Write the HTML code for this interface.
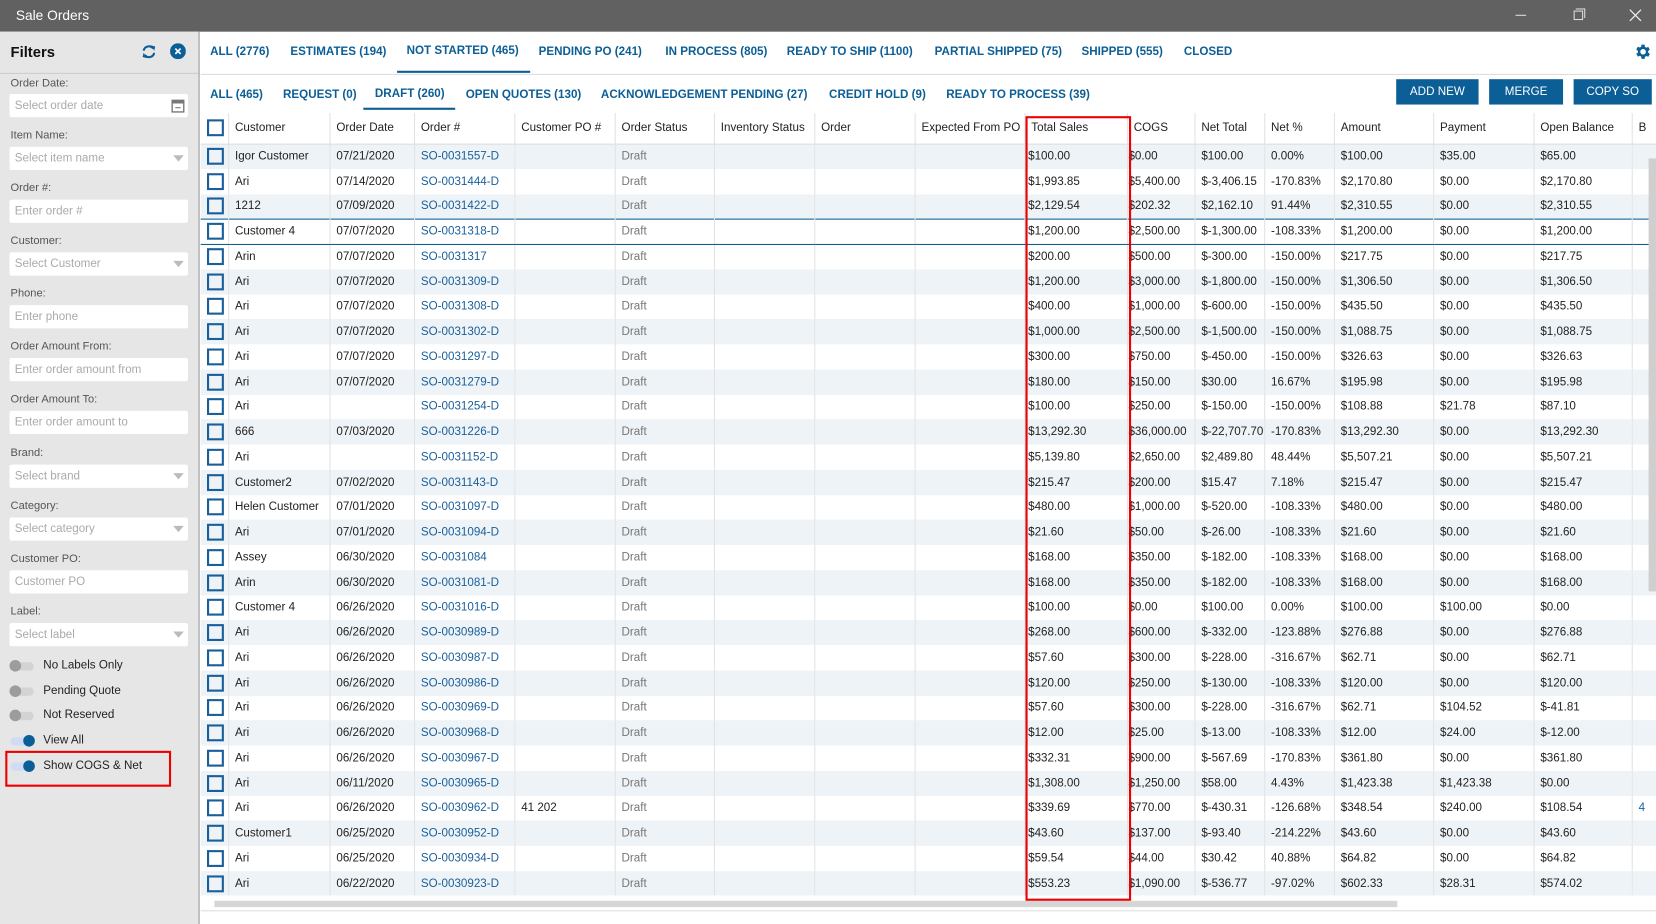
<!DOCTYPE html>
<html><head><meta charset="utf-8"><style>
*{box-sizing:border-box;margin:0;padding:0}
html,body{width:1656px;height:924px;overflow:hidden;background:#fff}
#s{position:absolute;left:0;top:0;width:1568px;height:875px;transform:scale(1.05612,1.056);transform-origin:0 0;font-family:"Liberation Sans",sans-serif;font-size:11px;color:#222}
.a{position:absolute}
#tb{left:0;top:0;width:1568px;height:30px;background:#616161;color:#fff}
#side{left:0;top:30px;width:189px;height:845px;background:#e6e6e6;border-right:1px solid #9a9a9a}
.lbl{position:absolute;left:10px;color:#555;font-size:10.5px}
.inp{position:absolute;left:9px;width:169px;height:22px;background:#fff;border-radius:2px;color:#aaa;font-size:11px;padding:5px 0 0 5px}
.dd:after{content:"";position:absolute;right:4px;top:8px;border-left:5px solid transparent;border-right:5px solid transparent;border-top:6px solid #bbb}
.tg{position:absolute;left:10px;width:22px;height:8px;border-radius:4px;background:#d3d3d3}
.tg i{position:absolute;left:-1px;top:-2px;width:11px;height:11px;border-radius:50%;background:#9c9c9c}
.tg.on{background:#cfdcf3}.tg.on i{left:12px;background:#0b5e96}
.tl{position:absolute;left:41px;font-size:11px;color:#222}
.tab{position:absolute;color:#0b5e96;font-weight:bold;font-size:11px;white-space:nowrap}
.btn{position:absolute;top:75px;height:24px;background:#0b5e96;color:#fff;font-size:11px;text-align:center;line-height:24px}
table{position:absolute;left:190px;top:107px;border-collapse:collapse;table-layout:fixed;width:1378px}
td,th{height:23.76px;font-weight:normal;text-align:left;padding:0 0 0 6px;white-space:nowrap;overflow:hidden;border-left:1px solid #e2e2e2;font-size:11px}
th{height:29px;border-bottom:1px solid #ddd;color:#222}
tr.z td{background:#edf3f6}
tr.sel td{border-top:1px solid #0b5e96;border-bottom:1px solid #0b5e96}
td.c,th.c{border-left:none;padding:0 0 0 6px}
.cb{display:inline-block;width:16px;height:16px;border:2px solid #1a5f9a;vertical-align:middle}
td.o{color:#1a5f9a}td.d{color:#777}
td.t{padding-left:3px}td.g{padding-left:1px}
</style></head><body><div id="s">
<div id="tb" class="a"><span class="a" style="left:15px;top:7px;font-size:13px">Sale Orders</span>
<span class="a" style="left:1435px;top:14px;width:10px;height:1px;background:#ddd"></span>
<span class="a" style="left:1490px;top:10px;width:9px;height:9px;border:1px solid #ddd"></span>
<span class="a" style="left:1492px;top:8px;width:9px;height:9px;border-top:1px solid #ddd;border-right:1px solid #ddd"></span>
<svg class="a" style="left:1543px;top:9px" width="11" height="11"><path d="M0 0L11 11M11 0L0 11" stroke="#eee" stroke-width="1.2"/></svg></div>
<div id="side" class="a">
<span class="a" style="left:10px;top:11px;font-weight:bold;font-size:14px;color:#111">Filters</span>
<svg class="a" style="left:133px;top:11px" width="16" height="16" viewBox="0 0 16 16"><path d="M3 7a5 5 0 0 1 9-2" fill="none" stroke="#0b5e96" stroke-width="2"/><path d="M13 9a5 5 0 0 1-9 2" fill="none" stroke="#0b5e96" stroke-width="2"/><path d="M10 2l4 1-1 4z M6 14l-4-1 1-4z" fill="#0b5e96"/></svg>
<svg class="a" style="left:161px;top:11px" width="15" height="15" viewBox="0 0 15 15"><circle cx="7.5" cy="7.5" r="7.5" fill="#0b5e96"/><path d="M5 5l5 5M10 5l-5 5" stroke="#fff" stroke-width="1.6"/></svg>
<div class="a" style="left:0;top:39px;width:188px;height:1px;background:#ccc"></div>
<div class="lbl" style="top:43px">Order Date:</div><div class="inp" style="top:59px">Select order date<svg class="a" style="right:3px;top:4px" width="13" height="14"><rect x="1" y="2" width="11" height="11" fill="none" stroke="#777" stroke-width="1.3"/><rect x="1" y="2" width="11" height="3" fill="#777"/><path d="M4 9h5" stroke="#777"/></svg></div>
<div class="lbl" style="top:92px">Item Name:</div><div class="inp dd" style="top:109px">Select item name</div>
<div class="lbl" style="top:142px">Order #:</div><div class="inp" style="top:159px">Enter order #</div>
<div class="lbl" style="top:192px">Customer:</div><div class="inp dd" style="top:209px">Select Customer</div>
<div class="lbl" style="top:242px">Phone:</div><div class="inp" style="top:259px">Enter phone</div>
<div class="lbl" style="top:292px">Order Amount From:</div><div class="inp" style="top:309px">Enter order amount from</div>
<div class="lbl" style="top:342px">Order Amount To:</div><div class="inp" style="top:359px">Enter order amount to</div>
<div class="lbl" style="top:393px">Brand:</div><div class="inp dd" style="top:410px">Select brand</div>
<div class="lbl" style="top:443px">Category:</div><div class="inp dd" style="top:460px">Select category</div>
<div class="lbl" style="top:493px">Customer PO:</div><div class="inp" style="top:510px">Customer PO</div>
<div class="lbl" style="top:543px">Label:</div><div class="inp dd" style="top:560px">Select label</div>
<div class="tg" style="top:597px"><i></i></div><div class="tl" style="top:594px">No Labels Only</div>
<div class="tg" style="top:621px"><i></i></div><div class="tl" style="top:618px">Pending Quote</div>
<div class="tg" style="top:644px"><i></i></div><div class="tl" style="top:641px">Not Reserved</div>
<div class="tg on" style="top:668px"><i></i></div><div class="tl" style="top:665px">View All</div>
<div class="tg on" style="top:692px"><i></i></div><div class="tl" style="top:689px">Show COGS &amp; Net</div>
<div class="a" style="left:5px;top:681px;width:157px;height:34px;border:2px solid #e00"></div>
</div>
<span class="tab" style="left:199px;top:43px">ALL (2776)</span>
<span class="tab" style="left:275px;top:43px">ESTIMATES (194)</span>
<span class="tab" style="left:385px;top:42px">NOT STARTED (465)</span>
<span class="tab" style="left:510px;top:43px">PENDING PO (241)</span>
<span class="tab" style="left:630px;top:43px">IN PROCESS (805)</span>
<span class="tab" style="left:745px;top:43px">READY TO SHIP (1100)</span>
<span class="tab" style="left:885px;top:43px">PARTIAL SHIPPED (75)</span>
<span class="tab" style="left:1024px;top:43px">SHIPPED (555)</span>
<span class="tab" style="left:1121px;top:43px">CLOSED</span>
<div class="a" style="left:376px;top:67px;width:126px;height:2px;background:#0b5e96"></div>
<div class="a" style="left:190px;top:70px;width:1378px;height:1px;background:#ddd"></div>
<svg class="a" style="left:1546px;top:40px" width="18" height="18" viewBox="0 0 24 24"><path fill="#0b5e96" d="M19.4 13a7.5 7.5 0 0 0 0-2l2.1-1.6-2-3.5-2.5 1a7 7 0 0 0-1.7-1L15 3h-4l-.4 2.7a7 7 0 0 0-1.7 1l-2.5-1-2 3.5L6.6 11a7.5 7.5 0 0 0 0 2l-2.1 1.6 2 3.5 2.5-1a7 7 0 0 0 1.7 1L11 21h4l.4-2.7a7 7 0 0 0 1.7-1l2.5 1 2-3.5zM13 15.5a3.5 3.5 0 1 1 0-7 3.5 3.5 0 0 1 0 7z"/></svg>
<span class="tab" style="left:199px;top:84px">ALL (465)</span>
<span class="tab" style="left:268px;top:84px">REQUEST (0)</span>
<span class="tab" style="left:355px;top:83px">DRAFT (260)</span>
<span class="tab" style="left:441px;top:84px">OPEN QUOTES (130)</span>
<span class="tab" style="left:569px;top:84px">ACKNOWLEDGEMENT PENDING (27)</span>
<span class="tab" style="left:785px;top:84px">CREDIT HOLD (9)</span>
<span class="tab" style="left:896px;top:84px">READY TO PROCESS (39)</span>
<div class="a" style="left:344px;top:102px;width:87px;height:2px;background:#0b5e96"></div>
<div class="btn" style="left:1322px;width:78px">ADD NEW</div>
<div class="btn" style="left:1410px;width:70px">MERGE</div>
<div class="btn" style="left:1490px;width:74px">COPY SO</div>
<table>
<colgroup><col style="width:26px"><col style="width:96px"><col style="width:80px"><col style="width:95px"><col style="width:95px"><col style="width:94px"><col style="width:95px"><col style="width:95px"><col style="width:104px"><col style="width:97px"><col style="width:64px"><col style="width:66px"><col style="width:66px"><col style="width:94px"><col style="width:95px"><col style="width:93px"><col style="width:29px"></colgroup>
<tr><th class="c"><span class="cb"></span></th><th>Customer</th><th>Order Date</th><th>Order #</th><th>Customer PO #</th><th>Order Status</th><th>Inventory Status</th><th>Order</th><th>Expected From PO</th><th class="t">Total Sales</th><th class="g">COGS</th><th>Net Total</th><th>Net %</th><th>Amount</th><th>Payment</th><th>Open Balance</th><th>B</th></tr>
<tr class="z"><td class="c"><span class="cb"></span></td><td>Igor Customer</td><td>07/21/2020</td><td class="o">SO-0031557-D</td><td></td><td class="d">Draft</td><td></td><td></td><td></td><td class="t">$100.00</td><td class="g">$0.00</td><td>$100.00</td><td>0.00%</td><td>$100.00</td><td>$35.00</td><td>$65.00</td><td></td></tr>
<tr><td class="c"><span class="cb"></span></td><td>Ari</td><td>07/14/2020</td><td class="o">SO-0031444-D</td><td></td><td class="d">Draft</td><td></td><td></td><td></td><td class="t">$1,993.85</td><td class="g">$5,400.00</td><td>$-3,406.15</td><td>-170.83%</td><td>$2,170.80</td><td>$0.00</td><td>$2,170.80</td><td></td></tr>
<tr class="z"><td class="c"><span class="cb"></span></td><td>1212</td><td>07/09/2020</td><td class="o">SO-0031422-D</td><td></td><td class="d">Draft</td><td></td><td></td><td></td><td class="t">$2,129.54</td><td class="g">$202.32</td><td>$2,162.10</td><td>91.44%</td><td>$2,310.55</td><td>$0.00</td><td>$2,310.55</td><td></td></tr>
<tr class="sel"><td class="c"><span class="cb"></span></td><td>Customer 4</td><td>07/07/2020</td><td class="o">SO-0031318-D</td><td></td><td class="d">Draft</td><td></td><td></td><td></td><td class="t">$1,200.00</td><td class="g">$2,500.00</td><td>$-1,300.00</td><td>-108.33%</td><td>$1,200.00</td><td>$0.00</td><td>$1,200.00</td><td></td></tr>
<tr><td class="c"><span class="cb"></span></td><td>Arin</td><td>07/07/2020</td><td class="o">SO-0031317</td><td></td><td class="d">Draft</td><td></td><td></td><td></td><td class="t">$200.00</td><td class="g">$500.00</td><td>$-300.00</td><td>-150.00%</td><td>$217.75</td><td>$0.00</td><td>$217.75</td><td></td></tr>
<tr class="z"><td class="c"><span class="cb"></span></td><td>Ari</td><td>07/07/2020</td><td class="o">SO-0031309-D</td><td></td><td class="d">Draft</td><td></td><td></td><td></td><td class="t">$1,200.00</td><td class="g">$3,000.00</td><td>$-1,800.00</td><td>-150.00%</td><td>$1,306.50</td><td>$0.00</td><td>$1,306.50</td><td></td></tr>
<tr><td class="c"><span class="cb"></span></td><td>Ari</td><td>07/07/2020</td><td class="o">SO-0031308-D</td><td></td><td class="d">Draft</td><td></td><td></td><td></td><td class="t">$400.00</td><td class="g">$1,000.00</td><td>$-600.00</td><td>-150.00%</td><td>$435.50</td><td>$0.00</td><td>$435.50</td><td></td></tr>
<tr class="z"><td class="c"><span class="cb"></span></td><td>Ari</td><td>07/07/2020</td><td class="o">SO-0031302-D</td><td></td><td class="d">Draft</td><td></td><td></td><td></td><td class="t">$1,000.00</td><td class="g">$2,500.00</td><td>$-1,500.00</td><td>-150.00%</td><td>$1,088.75</td><td>$0.00</td><td>$1,088.75</td><td></td></tr>
<tr><td class="c"><span class="cb"></span></td><td>Ari</td><td>07/07/2020</td><td class="o">SO-0031297-D</td><td></td><td class="d">Draft</td><td></td><td></td><td></td><td class="t">$300.00</td><td class="g">$750.00</td><td>$-450.00</td><td>-150.00%</td><td>$326.63</td><td>$0.00</td><td>$326.63</td><td></td></tr>
<tr class="z"><td class="c"><span class="cb"></span></td><td>Ari</td><td>07/07/2020</td><td class="o">SO-0031279-D</td><td></td><td class="d">Draft</td><td></td><td></td><td></td><td class="t">$180.00</td><td class="g">$150.00</td><td>$30.00</td><td>16.67%</td><td>$195.98</td><td>$0.00</td><td>$195.98</td><td></td></tr>
<tr><td class="c"><span class="cb"></span></td><td>Ari</td><td></td><td class="o">SO-0031254-D</td><td></td><td class="d">Draft</td><td></td><td></td><td></td><td class="t">$100.00</td><td class="g">$250.00</td><td>$-150.00</td><td>-150.00%</td><td>$108.88</td><td>$21.78</td><td>$87.10</td><td></td></tr>
<tr class="z"><td class="c"><span class="cb"></span></td><td>666</td><td>07/03/2020</td><td class="o">SO-0031226-D</td><td></td><td class="d">Draft</td><td></td><td></td><td></td><td class="t">$13,292.30</td><td class="g">$36,000.00</td><td>$-22,707.70</td><td>-170.83%</td><td>$13,292.30</td><td>$0.00</td><td>$13,292.30</td><td></td></tr>
<tr><td class="c"><span class="cb"></span></td><td>Ari</td><td></td><td class="o">SO-0031152-D</td><td></td><td class="d">Draft</td><td></td><td></td><td></td><td class="t">$5,139.80</td><td class="g">$2,650.00</td><td>$2,489.80</td><td>48.44%</td><td>$5,507.21</td><td>$0.00</td><td>$5,507.21</td><td></td></tr>
<tr class="z"><td class="c"><span class="cb"></span></td><td>Customer2</td><td>07/02/2020</td><td class="o">SO-0031143-D</td><td></td><td class="d">Draft</td><td></td><td></td><td></td><td class="t">$215.47</td><td class="g">$200.00</td><td>$15.47</td><td>7.18%</td><td>$215.47</td><td>$0.00</td><td>$215.47</td><td></td></tr>
<tr><td class="c"><span class="cb"></span></td><td>Helen Customer</td><td>07/01/2020</td><td class="o">SO-0031097-D</td><td></td><td class="d">Draft</td><td></td><td></td><td></td><td class="t">$480.00</td><td class="g">$1,000.00</td><td>$-520.00</td><td>-108.33%</td><td>$480.00</td><td>$0.00</td><td>$480.00</td><td></td></tr>
<tr class="z"><td class="c"><span class="cb"></span></td><td>Ari</td><td>07/01/2020</td><td class="o">SO-0031094-D</td><td></td><td class="d">Draft</td><td></td><td></td><td></td><td class="t">$21.60</td><td class="g">$50.00</td><td>$-26.00</td><td>-108.33%</td><td>$21.60</td><td>$0.00</td><td>$21.60</td><td></td></tr>
<tr><td class="c"><span class="cb"></span></td><td>Assey</td><td>06/30/2020</td><td class="o">SO-0031084</td><td></td><td class="d">Draft</td><td></td><td></td><td></td><td class="t">$168.00</td><td class="g">$350.00</td><td>$-182.00</td><td>-108.33%</td><td>$168.00</td><td>$0.00</td><td>$168.00</td><td></td></tr>
<tr class="z"><td class="c"><span class="cb"></span></td><td>Arin</td><td>06/30/2020</td><td class="o">SO-0031081-D</td><td></td><td class="d">Draft</td><td></td><td></td><td></td><td class="t">$168.00</td><td class="g">$350.00</td><td>$-182.00</td><td>-108.33%</td><td>$168.00</td><td>$0.00</td><td>$168.00</td><td></td></tr>
<tr><td class="c"><span class="cb"></span></td><td>Customer 4</td><td>06/26/2020</td><td class="o">SO-0031016-D</td><td></td><td class="d">Draft</td><td></td><td></td><td></td><td class="t">$100.00</td><td class="g">$0.00</td><td>$100.00</td><td>0.00%</td><td>$100.00</td><td>$100.00</td><td>$0.00</td><td></td></tr>
<tr class="z"><td class="c"><span class="cb"></span></td><td>Ari</td><td>06/26/2020</td><td class="o">SO-0030989-D</td><td></td><td class="d">Draft</td><td></td><td></td><td></td><td class="t">$268.00</td><td class="g">$600.00</td><td>$-332.00</td><td>-123.88%</td><td>$276.88</td><td>$0.00</td><td>$276.88</td><td></td></tr>
<tr><td class="c"><span class="cb"></span></td><td>Ari</td><td>06/26/2020</td><td class="o">SO-0030987-D</td><td></td><td class="d">Draft</td><td></td><td></td><td></td><td class="t">$57.60</td><td class="g">$300.00</td><td>$-228.00</td><td>-316.67%</td><td>$62.71</td><td>$0.00</td><td>$62.71</td><td></td></tr>
<tr class="z"><td class="c"><span class="cb"></span></td><td>Ari</td><td>06/26/2020</td><td class="o">SO-0030986-D</td><td></td><td class="d">Draft</td><td></td><td></td><td></td><td class="t">$120.00</td><td class="g">$250.00</td><td>$-130.00</td><td>-108.33%</td><td>$120.00</td><td>$0.00</td><td>$120.00</td><td></td></tr>
<tr><td class="c"><span class="cb"></span></td><td>Ari</td><td>06/26/2020</td><td class="o">SO-0030969-D</td><td></td><td class="d">Draft</td><td></td><td></td><td></td><td class="t">$57.60</td><td class="g">$300.00</td><td>$-228.00</td><td>-316.67%</td><td>$62.71</td><td>$104.52</td><td>$-41.81</td><td></td></tr>
<tr class="z"><td class="c"><span class="cb"></span></td><td>Ari</td><td>06/26/2020</td><td class="o">SO-0030968-D</td><td></td><td class="d">Draft</td><td></td><td></td><td></td><td class="t">$12.00</td><td class="g">$25.00</td><td>$-13.00</td><td>-108.33%</td><td>$12.00</td><td>$24.00</td><td>$-12.00</td><td></td></tr>
<tr><td class="c"><span class="cb"></span></td><td>Ari</td><td>06/26/2020</td><td class="o">SO-0030967-D</td><td></td><td class="d">Draft</td><td></td><td></td><td></td><td class="t">$332.31</td><td class="g">$900.00</td><td>$-567.69</td><td>-170.83%</td><td>$361.80</td><td>$0.00</td><td>$361.80</td><td></td></tr>
<tr class="z"><td class="c"><span class="cb"></span></td><td>Ari</td><td>06/11/2020</td><td class="o">SO-0030965-D</td><td></td><td class="d">Draft</td><td></td><td></td><td></td><td class="t">$1,308.00</td><td class="g">$1,250.00</td><td>$58.00</td><td>4.43%</td><td>$1,423.38</td><td>$1,423.38</td><td>$0.00</td><td></td></tr>
<tr><td class="c"><span class="cb"></span></td><td>Ari</td><td>06/26/2020</td><td class="o">SO-0030962-D</td><td>41 202</td><td class="d">Draft</td><td></td><td></td><td></td><td class="t">$339.69</td><td class="g">$770.00</td><td>$-430.31</td><td>-126.68%</td><td>$348.54</td><td>$240.00</td><td>$108.54</td><td class="o">4</td></tr>
<tr class="z"><td class="c"><span class="cb"></span></td><td>Customer1</td><td>06/25/2020</td><td class="o">SO-0030952-D</td><td></td><td class="d">Draft</td><td></td><td></td><td></td><td class="t">$43.60</td><td class="g">$137.00</td><td>$-93.40</td><td>-214.22%</td><td>$43.60</td><td>$0.00</td><td>$43.60</td><td></td></tr>
<tr><td class="c"><span class="cb"></span></td><td>Ari</td><td>06/25/2020</td><td class="o">SO-0030934-D</td><td></td><td class="d">Draft</td><td></td><td></td><td></td><td class="t">$59.54</td><td class="g">$44.00</td><td>$30.42</td><td>40.88%</td><td>$64.82</td><td>$0.00</td><td>$64.82</td><td></td></tr>
<tr class="z"><td class="c"><span class="cb"></span></td><td>Ari</td><td>06/22/2020</td><td class="o">SO-0030923-D</td><td></td><td class="d">Draft</td><td></td><td></td><td></td><td class="t">$553.23</td><td class="g">$1,090.00</td><td>$-536.77</td><td>-97.02%</td><td>$602.33</td><td>$28.31</td><td>$574.02</td><td></td></tr>
</table>
<div class="a" style="left:190px;top:848px;width:1378px;height:27px;background:#fff"></div>
<div class="a" style="left:203px;top:853px;width:1120px;height:6px;background:#d6d6d6"></div>
<div class="a" style="left:190px;top:862px;width:1378px;height:1px;background:#ddd"></div>
<div class="a" style="left:1561px;top:150px;width:7px;height:410px;background:#cfcfcf"></div>
<div class="a" style="left:971px;top:110px;width:100px;height:743px;border:2px solid #e00"></div>
</div></body></html>
